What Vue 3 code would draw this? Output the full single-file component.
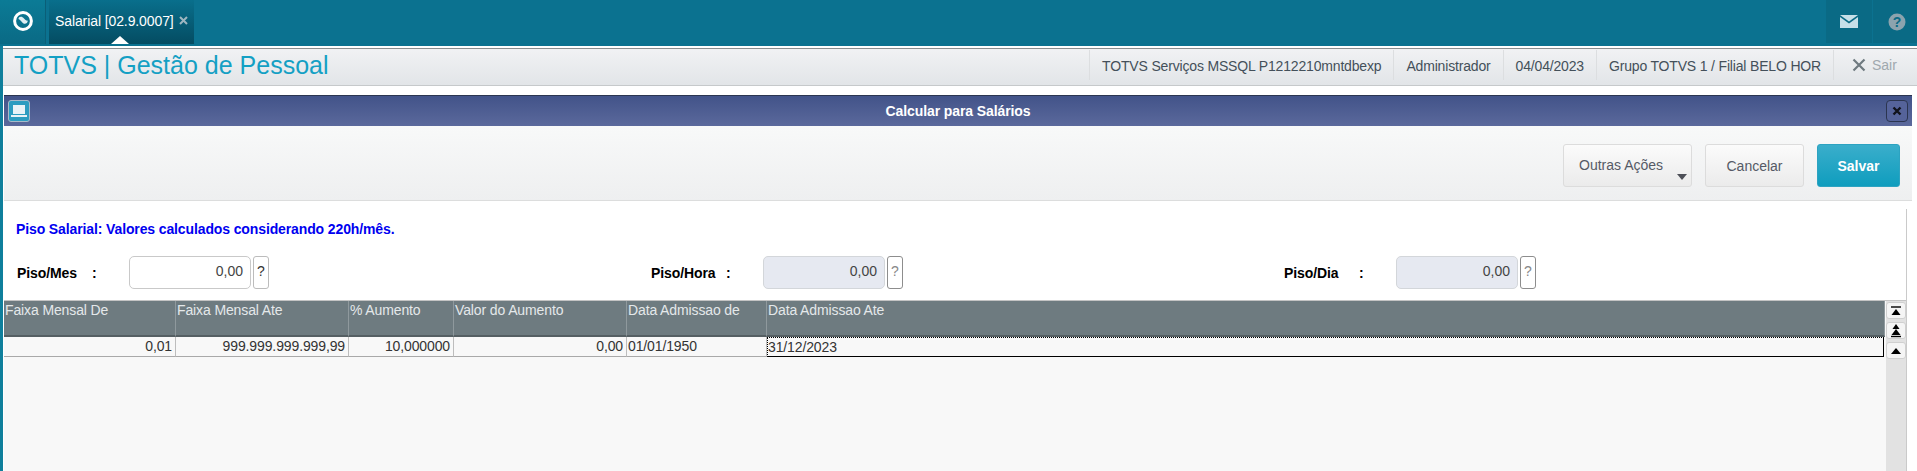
<script setup>
const columns = [
  { label: 'Faixa Mensal De', value: '0,01', right: true },
  { label: 'Faixa Mensal Ate', value: '999.999.999.999,99', right: true },
  { label: '% Aumento', value: '10,000000', right: true },
  { label: 'Valor do Aumento', value: '0,00', right: true },
  { label: 'Data Admissao de', value: '01/01/1950', right: false },
  { label: 'Data Admissao Ate', value: '31/12/2023', right: false, focus: true }
]
const infos = ['TOTVS Serviços MSSQL P1212210mntdbexp', 'Administrador', '04/04/2023', 'Grupo TOTVS 1 / Filial BELO HOR']
const fields = [
  { label: 'Piso/Mes', off: false },
  { label: 'Piso/Hora', off: true },
  { label: 'Piso/Dia', off: true }
]
</script>

<template>
  <div class="page">
    <div class="topbar">
      <div class="tabs">
        <div class="logo-tile">
          <svg width="22" height="22" viewBox="0 0 22 22">
            <circle cx="11" cy="11" r="8.4" fill="none" stroke="#fff" stroke-width="3" />
            <path d="M6.5 9C6.5 6.5 10 6 12 8.5C13 10 15 11 15.8 10.5C15.8 13 13.5 14.5 11.5 13.5C10 12.5 8 9.5 6.5 9Z" fill="#dfeef2" />
          </svg>
        </div>
        <div class="tab">
          <span class="tab-label">Salarial [02.9.0007]</span>
          <svg class="tab-x" width="9" height="9" viewBox="0 0 9 9">
            <path d="M1 1L8 8M8 1L1 8" stroke="#9fb6c0" stroke-width="2" />
          </svg>
          <i class="tab-arrow"></i>
        </div>
      </div>
      <div class="tools">
        <div class="tool">
          <svg width="18" height="13" viewBox="0 0 18 13">
            <path d="M0 0H18L9 6.5Z" fill="#c6dfe8" />
            <path d="M0 2L9 8.6L18 2V13H0Z" fill="#c6dfe8" />
          </svg>
        </div>
        <div class="tool help">
          <svg width="18" height="18" viewBox="0 0 18 18">
            <circle cx="9" cy="9" r="8.5" fill="#8ba3ae" />
            <text x="9" y="14" text-anchor="middle" class="help-q">?</text>
          </svg>
        </div>
      </div>
    </div>

    <div class="main">
      <div class="appbar">
        <div class="brand">TOTVS | Gestão de Pessoal</div>
        <div class="infos">
          <div v-for="t in infos" :key="t" class="info">{{ t }}</div>
          <div class="info exit">
            <svg width="14" height="14" viewBox="0 0 14 14">
              <path d="M1.5 1.5L12.5 12.5M12.5 1.5L1.5 12.5" stroke="#6f7a80" stroke-width="2.2" />
            </svg>
            <span>Sair</span>
          </div>
        </div>
      </div>

      <div class="dialog">
        <div class="titlebar">
          <div class="title-icon">
            <svg width="16" height="14" viewBox="0 0 16 14">
              <rect x="2" y="1" width="12" height="9" fill="#e8f2f6" />
              <rect x="0" y="11" width="16" height="2" fill="#e8f2f6" />
            </svg>
          </div>
          <span class="title">Calcular para Salários</span>
          <div class="title-close">
            <svg width="10" height="10" viewBox="0 0 10 10">
              <path d="M1.5 1.5L8.5 8.5M8.5 1.5L1.5 8.5" stroke="#11131c" stroke-width="2.4" />
            </svg>
          </div>
        </div>

        <div class="toolbar">
          <button class="btn other">Outras Ações<i class="caret"></i></button>
          <button class="btn cancel">Cancelar</button>
          <button class="btn save">Salvar</button>
        </div>

        <div class="content">
          <div class="inner">
            <p class="notice">Piso Salarial: Valores calculados considerando 220h/mês.</p>
            <div class="fields">
              <div v-for="f in fields" :key="f.label" class="field">
                <label class="flabel"><span>{{ f.label }}</span><span>:</span></label>
                <div class="finput" :class="{ off: f.off }">0,00</div>
                <div class="fhelp" :class="{ off: f.off }">?</div>
              </div>
            </div>

            <div class="grid-area">
              <div class="grid">
                <div class="gcols">
                  <div v-for="c in columns" :key="c.label" class="ghead">{{ c.label }}</div>
                  <div v-for="c in columns" :key="c.value" class="gcell" :class="{ right: c.right, focus: c.focus }">{{ c.value }}</div>
                </div>
              </div>
              <div class="scroll">
                <div class="sbtn">
                  <svg width="12" height="10" viewBox="0 0 12 10"><path d="M1 1H11" stroke="#000" stroke-width="1.4" /><path d="M6 3L10.5 9H1.5Z" /></svg>
                </div>
                <div class="sbtn">
                  <svg width="12" height="14" viewBox="0 0 12 14"><path d="M6 0L9.5 5H2.5Z" /><path d="M6 5L10.5 11H1.5Z" /><path d="M1 12.5H11" stroke="#000" stroke-width="1.4" /></svg>
                </div>
                <div class="sbtn">
                  <svg width="12" height="8" viewBox="0 0 12 8"><path d="M6 1L11 7H1Z" /></svg>
                </div>
              </div>
            </div>
          </div>
        </div>
      </div>
    </div>
  </div>
</template>

<style>
html, body { margin: 0; background: #fff; overflow: hidden; }
</style>

<style scoped>
.page {
  width: 1917px;
  height: 471px;
  display: flex;
  flex-direction: column;
  font-family: "Liberation Sans", Arial, sans-serif;
  background: #fff;
  overflow: hidden;
}
.topbar {
  height: 46px;
  flex: none;
  background: #0b7290;
  display: flex;
  justify-content: space-between;
}
.tabs, .tools { display: flex; }
.logo-tile {
  width: 46px;
  height: 44px;
  padding: 0 0 2px 1px;
  background: linear-gradient(#0b7b96, #0a6a85);
  border-right: 1px solid #0a5f78;
  box-sizing: border-box;
  display: flex;
  align-items: center;
  justify-content: center;
}
.tab {
  position: relative;
  margin-left: 3px;
  width: 145px;
  height: 44px;
  box-sizing: border-box;
  padding: 0 0 3px 6px;
  background: linear-gradient(#096f8c, #044c62);
  color: #fff;
  font-size: 14px;
  display: flex;
  align-items: center;
  gap: 5px;
}
.tab-label { letter-spacing: -0.1px; }
.tab-x { margin-top: -1px; }
.tab-arrow {
  position: absolute;
  left: 62px;
  bottom: 0;
  border-left: 9px solid transparent;
  border-right: 9px solid transparent;
  border-bottom: 8px solid #fff;
}
.tool {
  width: 46px;
  height: 43px;
  margin-left: 1px;
  box-sizing: border-box;
  background: #0a6a85;
  display: flex;
  align-items: center;
  justify-content: center;
}
.tool.help { width: 44px; padding-left: 3px; }
.help-q { font: bold 14px "Liberation Sans", sans-serif; fill: #0a6a85; }

.main {
  flex: 1;
  min-height: 0;
  border-left: 3px solid #0f7f9c;
  display: flex;
  flex-direction: column;
}
.appbar {
  height: 40px;
  flex: none;
  box-sizing: border-box;
  border-top: 2px solid #fff;
  border-bottom: 1px solid #c6c9cb;
  background: linear-gradient(#f1f2f4, #e2e5e8);
  box-shadow: inset 0 1px 0 #8a8d8f;
  display: flex;
  justify-content: space-between;
  align-items: stretch;
}
.brand {
  padding-left: 11px;
  font-size: 25px;
  line-height: 35px;
  color: #14a0c4;
}
.infos { display: flex; }
.info {
  border-left: 1px solid #dcdee0;
  padding: 0 12px;
  font-size: 14px;
  letter-spacing: -0.17px;
  color: #44505a;
  margin: 2px 0 3px;
  height: 30px;
  line-height: 32px;
}
.exit {
  width: 84px;
  box-sizing: border-box;
  padding-left: 18px;
  display: flex;
  align-items: center;
  gap: 6px;
  color: #a0a8ae;
  letter-spacing: 0;
}
.dialog {
  flex: 1;
  min-height: 0;
  margin: 9px 5px 0 1px;
  display: flex;
  flex-direction: column;
}
.titlebar {
  position: relative;
  height: 31px;
  flex: none;
  box-sizing: border-box;
  border-top: 1px solid #2b3550;
  background: linear-gradient(#425389, #5b699c);
  display: flex;
  align-items: center;
  justify-content: center;
}
.title { color: #fff; font-size: 14px; font-weight: bold; letter-spacing: -0.1px; }
.title-icon {
  position: absolute;
  left: 4px;
  top: 4px;
  width: 22px;
  height: 22px;
  box-sizing: border-box;
  border: 1px solid #a9bac9;
  border-radius: 3px;
  background: #2b9cc0;
  display: flex;
  align-items: center;
  justify-content: center;
}
.title-close {
  position: absolute;
  right: 4px;
  top: 4px;
  width: 22px;
  height: 22px;
  box-sizing: border-box;
  border: 1px solid #2b3550;
  border-radius: 4px;
  background: #55639a;
  display: flex;
  align-items: center;
  justify-content: center;
}
.toolbar {
  height: 75px;
  flex: none;
  box-sizing: border-box;
  border-bottom: 1px solid #dcdddd;
  background: linear-gradient(#f8f9f9, #eeeff0);
  padding: 18px 12px 0 0;
  display: flex;
  justify-content: flex-end;
  align-items: flex-start;
  gap: 13px;
}
.btn {
  position: relative;
  height: 43px;
  box-sizing: border-box;
  border: 1px solid #dcdcdc;
  border-radius: 3px;
  background: linear-gradient(#fbfbfb, #ebebeb);
  color: #555a66;
  font: 14px "Liberation Sans", sans-serif;
  padding: 0;
}
.other { width: 129px; text-align: left; padding: 0 0 2px 15px; }
.cancel { width: 99px; }
.save {
  width: 83px;
  color: #fff;
  font-weight: bold;
  border-color: #2da3c1;
  background: linear-gradient(#3aaecb, #0f9dbe);
}
.caret {
  position: absolute;
  right: 4px;
  bottom: 6px;
  border-left: 5px solid transparent;
  border-right: 5px solid transparent;
  border-top: 6px solid #4d4f57;
}
.content {
  flex: 1;
  min-height: 0;
  display: flex;
  background: #fff;
  padding-top: 8px;
}
.inner {
  flex: 1;
  min-width: 0;
  margin-right: 5px;
  border-right: 1px solid #cacaca;
  display: flex;
  flex-direction: column;
}
.notice {
  margin: 12px 0 0 12px;
  font-size: 14px;
  letter-spacing: -0.12px;
  line-height: 16px;
  font-weight: bold;
  color: #0000f0;
}
.fields {
  margin-top: 19px;
  height: 33px;
  flex: none;
  display: grid;
  grid-template-columns: 634px 633px 1fr;
  padding-left: 13px;
}
.field { display: flex; align-items: center; }
.flabel {
  width: 112px;
  display: flex;
  font-size: 14px;
  letter-spacing: -0.1px;
  font-weight: bold;
  color: #000;
}
.flabel span:first-child { width: 75px; }
.finput {
  width: 122px;
  height: 33px;
  box-sizing: border-box;
  border: 1px solid #c9c9c9;
  border-radius: 5px;
  padding: 0 7px 3px 0;
  font-size: 14px;
  color: #444;
  display: flex;
  align-items: center;
  justify-content: flex-end;
  background: #fff;
}
.finput.off { background: #e6e9f1; border-color: #d3d6da; }
.fhelp {
  width: 16px;
  height: 33px;
  margin-left: 2px;
  box-sizing: border-box;
  border: 1px solid #bcbcbc;
  border-radius: 3px;
  font-size: 14px;
  color: #333;
  display: flex;
  align-items: center;
  justify-content: center;
  padding-bottom: 3px;
}
.fhelp.off { color: #888; border-color: #8d8d8d; }
.grid-area {
  flex: 1;
  min-height: 0;
  margin-top: 11px;
  display: flex;
  background: #f8f8f8;
  border-top: 1px solid #c4c4c4;
}
.grid { flex: 1; min-width: 0; }
.gcols {
  display: grid;
  grid-template-columns: 172px 173px 105px 173px 140px 1fr;
  grid-template-rows: 36px 20px;
}
.ghead {
  box-sizing: border-box;
  background: #6e7b80;
  color: #e4e8ea;
  font-size: 14px;
  letter-spacing: -0.12px;
  line-height: 16px;
  padding: 1px 0 0 1px;
  border-right: 1px solid #8f999d;
  border-bottom: 2px solid #555f63;
}
.gcell {
  box-sizing: border-box;
  font-size: 14px;
  letter-spacing: -0.12px;
  line-height: 18px;
  color: #333;
  padding: 0 3px 0 1px;
  border-right: 1px solid #bdbdbd;
  border-bottom: 1px solid #a9a9a9;
}
.right { text-align: right; }
.focus {
  padding-left: 0;
  border: 1px dotted #000;
  border-bottom: 1px solid #000;
  border-right: 1px solid #000;
  margin-right: 1px;
}
.scroll {
  width: 20px;
  margin-left: 1px;
  flex: none;
  background: #e2e2e2;
  display: flex;
  flex-direction: column;
  padding-top: 1px;
  gap: 3px;
}
.sbtn {
  height: 17px;
  box-sizing: border-box;
  border: 1px solid #d0d0d0;
  border-radius: 3px;
  background: #f5f5f5;
  display: flex;
  align-items: center;
  justify-content: center;
}
</style>
